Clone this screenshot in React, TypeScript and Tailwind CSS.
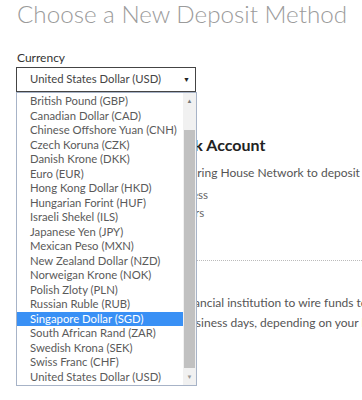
const currencies = [
  "British Pound (GBP)",
  "Canadian Dollar (CAD)",
  "Chinese Offshore Yuan (CNH)",
  "Czech Koruna (CZK)",
  "Danish Krone (DKK)",
  "Euro (EUR)",
  "Hong Kong Dollar (HKD)",
  "Hungarian Forint (HUF)",
  "Israeli Shekel (ILS)",
  "Japanese Yen (JPY)",
  "Mexican Peso (MXN)",
  "New Zealand Dollar (NZD)",
  "Norweigan Krone (NOK)",
  "Polish Zloty (PLN)",
  "Russian Ruble (RUB)",
  "Singapore Dollar (SGD)",
  "South African Rand (ZAR)",
  "Swedish Krona (SEK)",
  "Swiss Franc (CHF)",
  "United States Dollar (USD)",
];

export default function App() {
  return (
    <div className="relative w-[362px] h-[400px] overflow-hidden bg-white font-['Lato','Liberation_Sans',sans-serif]">
      <div className="px-[17px]">
        <h1 className="text-[24.2px] leading-[32px] font-light text-[#9b9b9b] whitespace-nowrap -mt-[2px]">
          Choose a New Deposit Method
        </h1>

        {/* currency picker */}
        <div className="mt-[20px]">
          <label className="block text-[12px] leading-[16px] text-[#333]">Currency</label>
          <div className="relative mt-[1px] w-[180px] -ml-[1px]">
            <div className="flex items-center justify-between h-[25px] border-[1.5px] border-[#444] pl-[13px] pr-[5px] text-[11.3px] text-[#444]">
              <span>United States Dollar (USD)</span>
              <span className="text-[7px] text-[#222]">▼</span>
            </div>

            {/* open list */}
            <div className="absolute left-0 top-full z-10 flex w-[181px] border border-[#a7b3c7] bg-white">
              <ul className="flex-1 py-px">
                {currencies.map((c) => (
                  <li
                    key={c}
                    className={
                      c === "Singapore Dollar (SGD)"
                        ? "h-[14.5px] leading-[14.5px] pl-[13px] text-[11.3px] whitespace-nowrap bg-[#3990f5] text-white"
                        : "h-[14.5px] leading-[14.5px] pl-[13px] text-[11.3px] whitespace-nowrap text-[#5a5a5a]"
                    }
                  >
                    {c}
                  </li>
                ))}
              </ul>
              <div className="flex w-[13px] flex-col bg-[#f1f1f1]">
                <div className="flex h-[14px] items-center justify-center text-[6px] text-[#777]">▲</div>
                <div className="mx-px mt-[23px] h-[238px] bg-[#c1c1c1]" />
                <div className="flex flex-1 items-center justify-center text-[6px] text-[#999]">▼</div>
              </div>
            </div>
          </div>
        </div>

        {/* deposit methods, partly under the list */}
        <div className="mt-[43px] flex">
          <div className="w-[42px] shrink-0" />
          <div className="min-w-0 flex-1 whitespace-nowrap pl-[10px]">
            <h2 className="text-[16px] leading-[20px] font-bold text-[#222]">Deposit from Bank Account</h2>
            <p className="mt-[10px] text-[12px] leading-[16px] text-[#555]">
              Use the Automated Clearing House Network to deposit funds from your bank
            </p>
            <p className="mt-[6px] text-[11.5px] leading-[16px] text-[#666]">Mode: Electronic, Paperless</p>
            <p className="mt-[2px] text-[11.5px] leading-[16px] text-[#666]">Availability: 24 to 48 hours</p>
          </div>
        </div>

        <div className="mt-[39px] ml-[180px] -mr-[17px] border-t border-dotted border-[#bbb]" />

        <div className="flex">
          <div className="w-[42px] shrink-0" />
          <div className="min-w-0 flex-1 whitespace-nowrap pl-[10px]">
            <h2 className="mt-[7px] text-[16px] leading-[20px] font-bold text-[#222]">Wire</h2>
            <p className="mt-[5px] text-[12px] leading-[20px] text-[#555]">
              Please message your financial institution to wire funds to us
            </p>
            <p className="text-[12px] leading-[20px] text-[#555]">
              Funds arrive within 2 business days, depending on your bank.
            </p>
          </div>
        </div>
      </div>
    </div>
  );
}
